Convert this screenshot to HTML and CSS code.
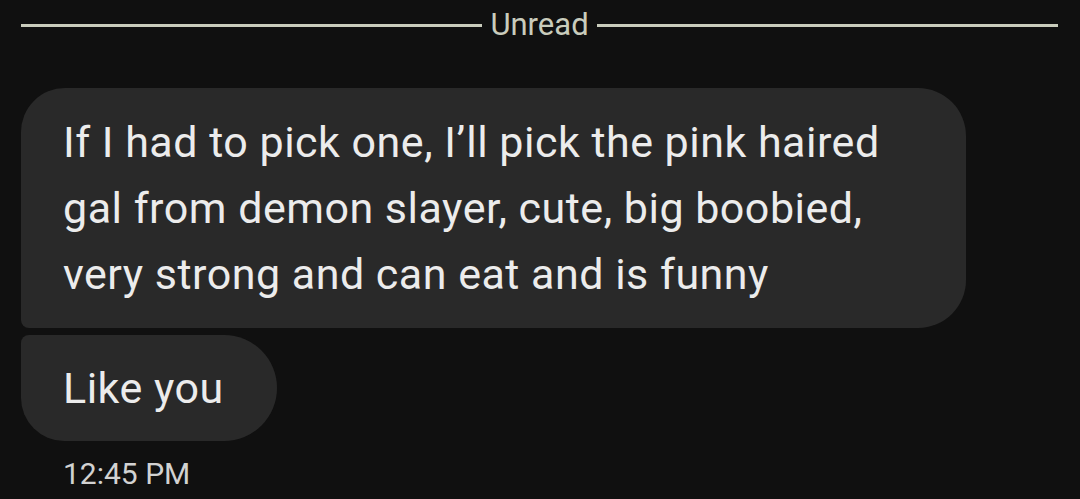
FILE: index.html
```html
<!DOCTYPE html>
<html lang="en">
<head>
    <meta charset="UTF-8">
    <meta name="viewport" content="width=device-width, initial-scale=1.0">
    <title>Messages</title>
    <link rel="stylesheet" href="styles.css">
</head>
<body>
    <div class="thread">
        <!-- Unread divider -->
        <div class="divider">
            <span class="divider-line"></span>
            <span class="divider-label">Unread</span>
            <span class="divider-line"></span>
        </div>

        <!-- Incoming messages -->
        <div class="group">
            <div class="bubble first">If I had to pick one, I’ll pick the pink haired gal from demon slayer, cute, big boobied, very strong and can eat and is funny</div>
            <div class="bubble last">Like you</div>
            <div class="time">12:45 PM</div>
        </div>
    </div>
</body>
</html>
```

FILE: styles.css
```css
* {
    margin: 0;
    padding: 0;
    box-sizing: border-box;
}

body {
    font-family: Roboto, "Noto Sans", sans-serif;
    background: #101010;
    color: #ececec;
    width: 1080px;
    height: 499px;
    overflow: hidden;
}

.thread {
    padding: 0 22px 0 21px;
}

/* Divider */
.divider {
    display: flex;
    align-items: center;
    gap: 8px;
    height: 50px;
}

.divider-line {
    flex: 1;
    height: 3px;
    background: #c9ccbc;
}

.divider-label {
    font-size: 31px;
    color: #c9ccbc;
    padding-bottom: 2px;
}

/* Bubbles */
.group {
    display: flex;
    flex-direction: column;
    align-items: flex-start;
    gap: 7px;
    margin-top: 38px;
}

.bubble {
    background: #292929;
    font-size: 43px;
    line-height: 66px;
    letter-spacing: 0.5px;
    padding: 21px 42px 21px 42px;
}

.bubble.first {
    width: 945px;
    border-radius: 44px 48px 48px 8px;
    padding-right: 60px;
}

.bubble.last {
    border-radius: 8px 54px 54px 44px;
    padding: 20px 53px 20px 42px;
}

.time {
    font-size: 30px;
    color: #d2d2d2;
    padding-left: 42px;
    margin-top: 8px;
}
```
